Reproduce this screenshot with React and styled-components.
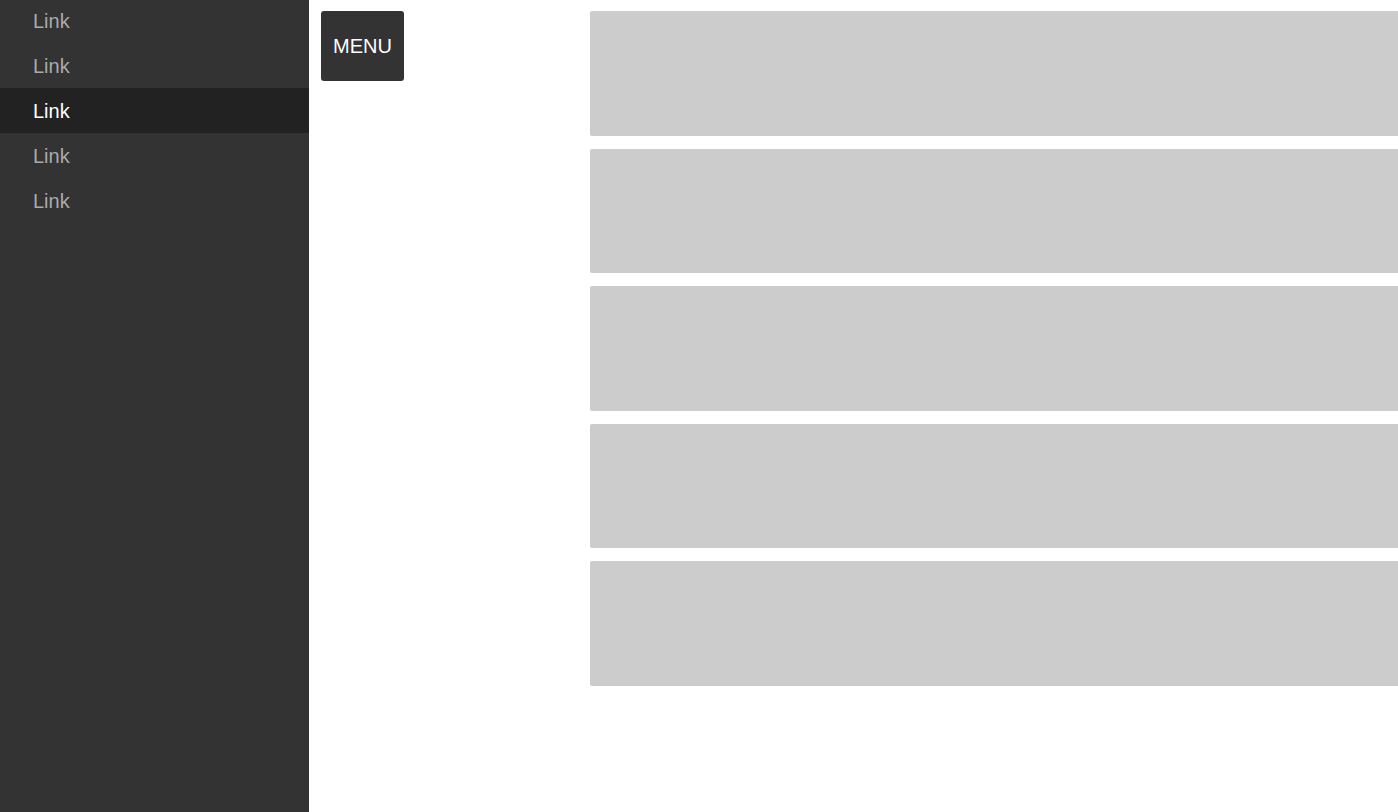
import React from "react";
import styled, { createGlobalStyle } from "styled-components";

const GlobalStyle = createGlobalStyle`
  html, body {
    margin: 0;
    padding: 0;
    background: #fff;
    font-family: "Liberation Sans", Arial, sans-serif;
    overflow: hidden;
  }
`;

const Page = styled.div`
  display: flex;
  width: 100vw;
  height: 100vh;
  overflow: hidden;
`;

const Sidebar = styled.nav`
  width: 309px;
  flex-shrink: 0;
  background: #333;
  display: flex;
  flex-direction: column;
  margin-top: -2px;
  height: calc(100vh + 2px);
`;

const NavLink = styled.a`
  display: block;
  height: 45px;
  box-sizing: border-box;
  padding: 2px 0 0 33px;
  line-height: 43px;
  font-size: 20px;
  text-decoration: none;
  color: ${(p) => (p.$active ? "#fff" : "#aaa")};
  background: ${(p) => (p.$active ? "#222" : "transparent")};
  cursor: pointer;
`;

const Main = styled.main`
  flex: 1;
  display: grid;
  grid-template-columns: 281px 1fr;
  align-items: start;
  padding-top: 11px;
  min-width: 0;
`;

const MenuCell = styled.div`
  padding-left: 12px;
`;

const MenuButton = styled.button`
  width: 83px;
  height: 70px;
  border: none;
  border-radius: 3px;
  background: #333;
  color: #fff;
  font-family: "Liberation Sans", Arial, sans-serif;
  font-size: 20px;
  padding: 0;
  cursor: pointer;
`;

const Content = styled.div`
  display: flex;
  flex-direction: column;
  gap: 13px;
  margin-right: -4px;
`;

const Box = styled.div`
  height: 124.5px;
  background: #ccc;
  border-radius: 2px;
`;

const links = ["Link", "Link", "Link", "Link", "Link"];

export default function App() {
  return (
    <>
      <GlobalStyle />
      <Page>
        <Sidebar>
          {links.map((l, i) => (
            <NavLink key={i} $active={i === 2}>
              {l}
            </NavLink>
          ))}
        </Sidebar>
        <Main>
          <MenuCell>
            <MenuButton>MENU</MenuButton>
          </MenuCell>
          <Content>
            {[0, 1, 2, 3, 4].map((i) => (
              <Box key={i} />
            ))}
          </Content>
        </Main>
      </Page>
    </>
  );
}
